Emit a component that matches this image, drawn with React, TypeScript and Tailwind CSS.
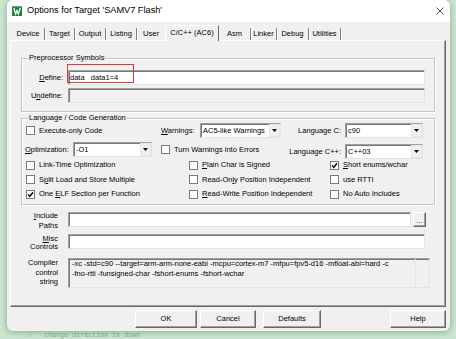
import React from "react";

const sunken =
  "border border-t-[#a0a0a0] border-l-[#a0a0a0] border-b-[#e3e3e3] border-r-[#e3e3e3] shadow-[inset_1px_1px_0_#787878]";
const raised =
  "border border-t-white border-l-white border-b-[#696969] border-r-[#696969] shadow-[inset_-1px_-1px_0_#a0a0a0] bg-[#f0f0f0]";

function Cb({ checked = false }: { checked?: boolean }) {
  return (
    <span className="w-[9px] h-[9px] shrink-0 border border-[#7a7a7a] bg-white flex items-center justify-center">
      {checked && (
        <svg width="7" height="7" viewBox="0 0 7 7">
          <path d="M1 3.4 L2.8 5.4 L6 1.3" stroke="#000" strokeWidth="1.4" fill="none" />
        </svg>
      )}
    </span>
  );
}

function Check({ label, checked = false }: { label: React.ReactNode; checked?: boolean }) {
  return (
    <div className="flex items-center gap-[4px] whitespace-nowrap">
      <Cb checked={checked} />
      <span className="leading-[10px]">{label}</span>
    </div>
  );
}

function Select({ value, className }: { value: string; className: string }) {
  return (
    <div className={`${className} h-[15px] flex bg-white ${sunken}`}>
      <span className="flex-1 pl-[2px] flex items-center leading-none whitespace-nowrap overflow-hidden">{value}</span>
      <span className="w-[11px] h-full flex items-center justify-center bg-[#f0f0f0] border border-[#e6e6e6]">
        <svg width="5" height="3" viewBox="0 0 5 3">
          <path d="M0 0H5L2.5 3Z" fill="#000" />
        </svg>
      </span>
    </div>
  );
}

function Tab({ label, className }: { label: string; className: string }) {
  return (
    <div className={`${className} h-[12px] flex items-center justify-center border-r border-[#7f7f7f] shadow-[1px_0_0_#fff] leading-none whitespace-nowrap`}>
      {label}
    </div>
  );
}

function Button({ label, className }: { label: string; className: string }) {
  return (
    <div className={`${className} h-[18px] flex items-center justify-center ${raised} leading-none`}>{label}</div>
  );
}

export default function App() {
  return (
    <div className="w-[456px] h-[339px] bg-[#c9e7d0] overflow-hidden text-black [font-family:'Liberation_Sans',Arial,sans-serif]">
      <div className="ml-[7px] w-[443px] h-[331px] bg-[#f0f0f0] rounded-[6px] shadow-[0_1px_6px_rgba(0,0,0,0.3)] flex flex-col overflow-hidden">
        {/* Title bar */}
        <div className="h-[22px] bg-white flex items-center shrink-0">
          <div className="ml-[5px] w-[10px] h-[10px]">
            <svg width="10" height="10" viewBox="0 0 10 10">
              <rect x="0" y="0" width="10" height="10" fill="#1f7f3a" />
              <path d="M1.8 2 L3.6 8 L5 4.5 L6.4 8 L8.2 2" stroke="#fff" strokeWidth="1.3" fill="none" />
              <rect x="0" y="0" width="10" height="1.2" fill="#4caf63" />
            </svg>
          </div>
          <span className="ml-[5px] text-[9.2px] leading-none whitespace-nowrap">Options for Target 'SAMV7 Flash'</span>
          <div className="ml-auto mr-[6px] w-[8px] h-[8px]">
            <svg width="8" height="8" viewBox="0 0 8 8">
              <path d="M0.5 0.5 L7.5 7.5 M7.5 0.5 L0.5 7.5" stroke="#333" strokeWidth="0.9" />
            </svg>
          </div>
        </div>

        {/* Tabs */}
        <div className="h-[18px] flex items-end pl-[5px] shrink-0 text-[7.5px]">
          <Tab label="Device" className="w-[33px]" />
          <Tab label="Target" className="w-[30px]" />
          <Tab label="Output" className="w-[31px]" />
          <Tab label="Listing" className="w-[31px]" />
          <div className="w-[28px] h-[12px] flex items-center justify-center leading-none">User</div>
          <div className="w-[54px] h-[16px] -mb-px relative z-10 bg-[#f0f0f0] border-l border-t border-white border-r border-r-[#696969] flex items-start justify-center pt-[2px] leading-[10px] whitespace-nowrap">
            C/C++ (AC6)
          </div>
          <Tab label="Asm" className="w-[32px]" />
          <Tab label="Linker" className="w-[26px]" />
          <Tab label="Debug" className="w-[32px]" />
          <Tab label="Utilities" className="w-[32px]" />
        </div>

        {/* Panel */}
        <div className="ml-[3px] w-[436px] h-[267px] shrink-0 border border-t-white border-l-white border-b-[#696969] border-r-[#696969] shadow-[inset_-1px_-1px_0_#a0a0a0] flex flex-col text-[7.5px] leading-[10px]">
          {/* Preprocessor Symbols */}
          <div className="ml-[10px] mt-[17px] w-[414px] h-[54px] shrink-0 relative border border-[#c4c4c4] shadow-[inset_1px_1px_0_#fff,1px_1px_0_#fff] flex flex-col">
            <span className="absolute left-[6px] top-[-6px] px-[1px] bg-[#f0f0f0] leading-[10px] whitespace-nowrap">
              Preprocessor Symbols
            </span>
            <div className="mt-[11px] h-[15px] flex items-center">
              <span className="w-[41px] text-right">
                <u>D</u>efine:
              </span>
              <div className={`ml-[5px] w-[357px] h-[15px] bg-white ${sunken} flex items-center pl-[1px] whitespace-pre leading-none`}>
                data   data1=4
              </div>
            </div>
            <div className="mt-[3px] h-[15px] flex items-center">
              <span className="w-[41px] text-right">
                U<u>n</u>define:
              </span>
              <div className={`ml-[5px] w-[357px] h-[15px] bg-[#f0f0f0] ${sunken}`} />
            </div>
            <div className="absolute left-[45px] top-[5px] w-[67px] h-[19px] border-[1.5px] border-[#e5333d]" />
          </div>

          {/* Language / Code Generation */}
          <div className="ml-[10px] mt-[6px] w-[414px] h-[87px] shrink-0 relative border border-[#c4c4c4] shadow-[inset_1px_1px_0_#fff,1px_1px_0_#fff] flex flex-col">
            <span className="absolute left-[6px] top-[-6px] px-[1px] bg-[#f0f0f0] leading-[10px] whitespace-nowrap">
              Language / Code Generation
            </span>
            {/* Row 1 */}
            <div className="mt-[4px] h-[15px] flex items-center">
              <div className="w-[139px] pl-[4px]">
                <Check label="Execute-only Code" />
              </div>
              <span className="w-[39px]">
                <u>W</u>arnings:
              </span>
              <Select value="AC5-like Warnings" className="w-[81px]" />
              <span className="w-[64px] text-right pr-[4px]">Language C:</span>
              <Select value="c90" className="w-[78px]" />
            </div>
            {/* Row 2 */}
            <div className="mt-[4px] h-[16px] flex items-start">
              <div className="w-[51px] pl-[3px] h-[15px] flex items-center">
                <span>
                  <u>O</u>ptimization:
                </span>
              </div>
              <Select value="-O1" className="w-[79px]" />
              <div className="ml-[9px] w-[128px] h-[15px] flex items-center">
                <Check label="Turn Warnings into Errors" />
              </div>
              <div className="w-[56px] mt-[2px] h-[15px] flex items-center justify-end pr-[4px] whitespace-nowrap">
                Language C++:
              </div>
              <div className="mt-[2px]">
                <Select value="C++03" className="w-[78px]" />
              </div>
            </div>
            {/* Rows 3-5 */}
            <div className="pl-[4px] flex flex-col">
              <div className="h-[14.5px] flex items-center">
                <div className="w-[163px]">
                  <Check label="Link-Time Optimization" />
                </div>
                <div className="w-[141px]">
                  <Check
                    label={
                      <>
                        <u>P</u>lain Char is Signed
                      </>
                    }
                  />
                </div>
                <Check
                  checked
                  label={
                    <>
                      <u>S</u>hort enums/wchar
                    </>
                  }
                />
              </div>
              <div className="h-[14.5px] flex items-center">
                <div className="w-[163px]">
                  <Check
                    label={
                      <>
                        S<u>p</u>lit Load and Store Multiple
                      </>
                    }
                  />
                </div>
                <div className="w-[141px]">
                  <Check
                    label={
                      <>
                        Read-On<u>l</u>y Position Independent
                      </>
                    }
                  />
                </div>
                <Check label="use RTTI" />
              </div>
              <div className="h-[14.5px] flex items-center">
                <div className="w-[163px]">
                  <Check
                    checked
                    label={
                      <>
                        One <u>E</u>LF Section per Function
                      </>
                    }
                  />
                </div>
                <div className="w-[141px]">
                  <Check
                    label={
                      <>
                        <u>R</u>ead-Write Position Independent
                      </>
                    }
                  />
                </div>
                <Check label="No Auto Includes" />
              </div>
            </div>
          </div>

          {/* Include Paths */}
          <div className="mt-[7px] h-[15px] shrink-0 flex pl-[10px]">
            <span className="w-[37px] text-right leading-[10px] -mt-[1px]">
              <u>I</u>nclude
              <br />
              Paths
            </span>
            <div className={`ml-[10px] w-[343px] h-[15px] bg-white ${sunken}`} />
            <div className={`ml-[2px] w-[13px] h-[15px] ${raised} flex items-end justify-center leading-[9px] pb-[1px]`}>
              ...
            </div>
          </div>

          {/* Misc Controls */}
          <div className="mt-[7px] h-[15px] shrink-0 flex pl-[10px]">
            <span className="w-[37px] text-right leading-[8px] mt-[1px]">
              <u>M</u>isc
              <br />
              Controls
            </span>
            <div className={`ml-[10px] w-[357px] h-[15px] bg-white ${sunken}`} />
          </div>

          {/* Compiler control string */}
          <div className="mt-[9px] h-[30px] shrink-0 flex pl-[10px]">
            <span className="w-[37px] text-right leading-[9.5px]">
              Compiler
              <br />
              control
              <br />
              string
            </span>
            <div className={`ml-[10px] w-[362px] h-[30px] bg-[#f0f0f0] ${sunken} flex`}>
              <div className="flex-1 pl-[3px] leading-[10px] whitespace-nowrap overflow-hidden">
                -xc -std=c90 --target=arm-arm-none-eabi -mcpu=cortex-m7 -mfpu=fpv5-d16 -mfloat-abi=hard -c
                <br />
                -fno-rtti -funsigned-char -fshort-enums -fshort-wchar
              </div>
              <div className="w-[14px] border-l border-[#e6e6e6]" />
            </div>
          </div>
        </div>

        {/* Buttons */}
        <div className="mt-[3px] flex text-[7.5px]">
          <Button label="OK" className="ml-[128px] w-[62px]" />
          <Button label="Cancel" className="ml-[3px] w-[56px]" />
          <Button label="Defaults" className="ml-[7px] w-[58px]" />
          <Button label="Help" className="ml-[69px] w-[56px]" />
        </div>
      </div>
      <div className="pl-[28px] h-[8px] text-[6.7px] leading-[8px] text-[#3d7a4c] opacity-50 whitespace-pre [font-family:'Liberation_Mono',monospace]">
        /   change direction to down
      </div>
    </div>
  );
}
